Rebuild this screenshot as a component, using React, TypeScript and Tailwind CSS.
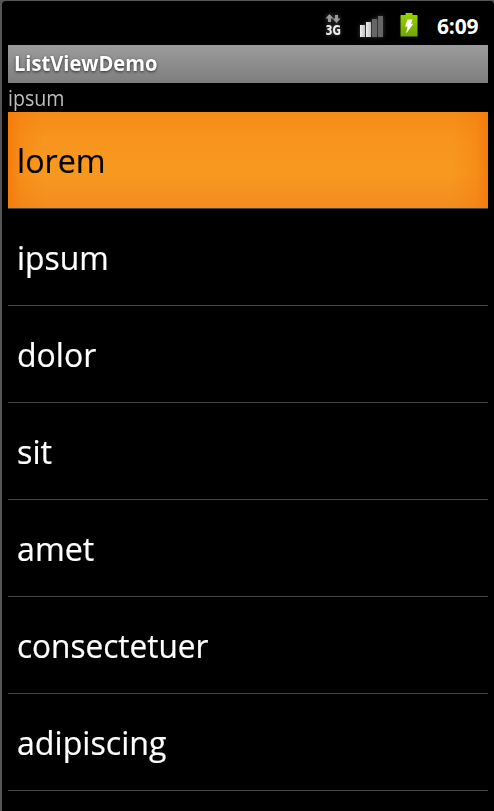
const items = [
  { label: 'lorem', width: 'scale-x-[0.976]' },
  { label: 'ipsum', width: 'scale-x-[0.965]' },
  { label: 'dolor', width: 'scale-x-[0.970]' },
  { label: 'sit', width: 'scale-x-[0.980]' },
  { label: 'amet', width: 'scale-x-[0.975]' },
  { label: 'consectetuer', width: 'scale-x-[0.956]' },
  { label: 'adipiscing', width: 'scale-x-[0.974]' },
];

function NetworkIcon() {
  return (
    <svg width="18" height="24" viewBox="0 0 18 24" className="overflow-visible drop-shadow-[0_0_2px_rgba(255,255,255,0.35)]">
      <g fill="#999999">
        <path d="M5.500 1 9.500 5.500H7V9H4V5.500H1.500z" />
        <path d="M11 2h3v3.500h2.500L12.500 10 8.500 5.500H11z" />
      </g>
      <text x="1.500" y="22" textLength="15.5" lengthAdjust="spacingAndGlyphs" fill="#eeeeee" className="font-['DejaVu_Sans',sans-serif] text-[13.500px] font-bold">3G</text>
    </svg>
  );
}

function SignalIcon() {
  return (
    <div className="flex h-[22px] items-end gap-px drop-shadow-[0_0_2px_rgba(255,255,255,0.25)]">
      <div className="h-[12px] w-[5px] bg-linear-to-r from-[#eeeeee] to-[#c0c0c0]" />
      <div className="h-[15px] w-[5px] bg-linear-to-r from-[#eeeeee] to-[#c0c0c0]" />
      <div className="h-[18px] w-[5px] bg-[#666666]" />
      <div className="h-[21px] w-[5px] bg-[#666666]" />
    </div>
  );
}

function BatteryIcon() {
  return (
    <svg width="18" height="24" viewBox="0 0 18 24">
      <defs>
        <linearGradient id="cell" x1="0" y1="0" x2="0" y2="1">
          <stop offset="0" stopColor="#94d600" />
          <stop offset="1" stopColor="#72a506" />
        </linearGradient>
      </defs>
      <path d="M5.500 0h7v2h4.500l.5.8V23.500H.5V2.800L1 2h4.500z" fill="url(#cell)" />
      <path d="M7.500 6.500h5l-1.500 4.200h2.300L6.200 20.500l1.300-7H5z" fill="#ffffff" />
    </svg>
  );
}

export default function App() {
  return (
    <div className="h-[811px] w-[494px] overflow-hidden bg-[#555555] pt-px pl-[2px] font-['Open_Sans','Noto_Sans',sans-serif]">
      <div className="flex h-full flex-col rounded-t-[4px] bg-black pr-[6px] pl-[6px]">
        <header className="flex h-[44px] shrink-0 items-end pb-[8px] text-white">
          <div className="ml-[316px]"><NetworkIcon /></div>
          <div className="ml-[18px]"><SignalIcon /></div>
          <div className="ml-[17px]"><BatteryIcon /></div>
          <span className="ml-[19px] w-[44px] translate-y-[2px] text-[21px] leading-[26px] font-bold tracking-[-0.150px] whitespace-nowrap">6:09</span>
        </header>
        <h1 className="h-[38px] shrink-0 bg-linear-to-b from-[#9c9c9c] to-[#7e7e7e] pl-[6px] text-[21px] leading-[37px] font-bold text-white [text-shadow:0_1px_3px_rgba(0,0,0,0.7)]">
          <span className="inline-block origin-left scale-x-[0.957]">ListViewDemo</span>
        </h1>
        <p className="h-[29px] shrink-0 origin-left scale-x-[0.935] text-[21px] leading-[30px] text-[#bebebe]">ipsum</p>
        <ul className="shrink-0">
          {items.map((item, index) => (
            <li
              key={item.label}
              className={
                index === 0
                  ? 'h-[97px] border-b border-[#454545] bg-[linear-gradient(90deg,#f57c0c_0,rgba(245,124,12,0.4)_12px,transparent_36px,transparent_444px,rgba(245,124,12,0.4)_468px,#f57c0c_100%),linear-gradient(180deg,#f58b17_0,#f7951e_28%,#f7991f_65%,#f28c1f_100%)] pl-[9px] text-black'
                  : 'h-[97px] border-b border-[#454545] pl-[9px] text-white'
              }
            >
              <span className={`block origin-left text-[33px] leading-[98px] [-webkit-text-stroke:0.2px_currentColor] ${item.width}`}>{item.label}</span>
            </li>
          ))}
        </ul>
      </div>
    </div>
  );
}
